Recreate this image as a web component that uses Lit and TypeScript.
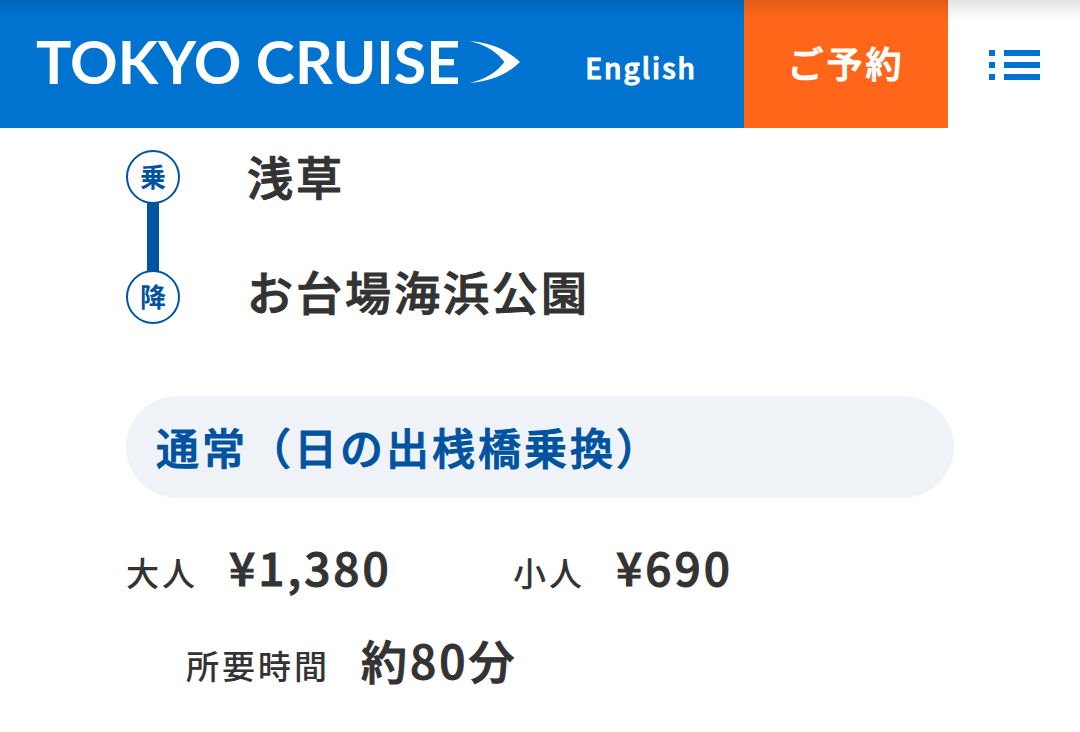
import { LitElement, html, css } from "lit";
import { customElement } from "lit/decorators.js";

@customElement("app-root")
export class AppRoot extends LitElement {
  static styles = css`
    :host {
      display: block;
      font-family: "Noto Sans CJK JP", sans-serif;
      font-weight: 500;
      letter-spacing: 3px;
      color: #333;
      background: #fff;
    }
    header {
      position: relative;
      display: flex;
      height: 128px;
      background: #0073d1;
    }
    header::after {
      content: "";
      position: absolute;
      inset: 0 0 auto;
      height: 20px;
      background: linear-gradient(rgba(0, 0, 0, 0.11), transparent);
      pointer-events: none;
    }
    a { color: inherit; text-decoration: none; }
    .brand {
      display: flex;
      align-items: center;
      flex: 1;
      gap: 10px;
      padding: 0 0 4px 36px;
      color: #fff;
      font: 700 59px/124px Lato, sans-serif;
      letter-spacing: normal;
      white-space: nowrap;
    }
    .swoosh { width: 50px; height: 42px; fill: #fff; }
    .lang {
      padding: 6px 47px 0 0;
      color: #fff;
      font-size: 28px;
      letter-spacing: 2px;
      line-height: 122px;
    }
    .reserve {
      width: 204px;
      background: #ff661a;
      color: #fff;
      font-size: 36px;
      line-height: 124px;
      text-align: center;
    }
    .menu {
      display: grid;
      place-items: center;
      width: 132px;
      padding: 2px 0 0;
      border: 0;
      background: #fff;
    }
    .bars { width: 51px; height: 30px; fill: #0073d1; }
    .lang, .reserve, .stops, .plan, dd {
      -webkit-text-stroke: 1px currentColor;
    }
    main { padding: 22px 126px 40px; }
    .route { display: flex; gap: 67px; }
    .marks { flex: none; width: 54px; }
    .mark {
      display: block;
      box-sizing: border-box;
      height: 54px;
      border: 2px solid #00539f;
      border-radius: 50%;
      color: #00539f;
      font-size: 26px;
      font-weight: 700;
      letter-spacing: 0;
      line-height: 48px;
      text-align: center;
    }
    .track {
      display: block;
      width: 12px;
      height: 68px;
      margin: -1px auto;
      background: #00539f;
    }
    .stops {
      display: grid;
      align-content: start;
      gap: 65px;
      margin: 0;
      padding: 0;
      list-style: none;
      font-size: 46px;
      line-height: 50px;
    }
    .plan {
      margin: 72px 0 0;
      padding: 0 30px 2px;
      border-radius: 51px;
      background: #eff3f8;
      color: #00539f;
      font-size: 43px;
      font-weight: inherit;
      line-height: 100px;
    }
    .facts {
      display: grid;
      grid-template-columns: 387px 1fr;
      row-gap: 18px;
      margin: 34px 0 0;
    }
    .fact {
      display: flex;
      align-items: baseline;
      gap: 31px;
      line-height: 69px;
    }
    .time { grid-column: 1 / -1; padding-left: 60px; }
    dt { font-size: 33px; }
    dd { margin: 0; font-size: 46px; }
  `;

  render() {
    return html`
      <header>
        <a class="brand" href="#">TOKYO CRUISE
          <svg class="swoosh" viewBox="0 0 48 42" preserveAspectRatio="none" aria-hidden="true">
            <path d="M0 0C22 2 37 10 48 21C37 32 22 40 0 42C15 38 26 31 33 21C26 11 15 4 0 0Z" />
          </svg>
        </a>
        <a class="lang" href="#">English</a>
        <a class="reserve" href="#">ご予約</a>
        <button class="menu" aria-label="メニュー">
          <svg class="bars" viewBox="0 0 51 30" aria-hidden="true">
            <path d="M0 0h6v6H0zM15 0h36v6H15zM0 12h6v6H0zM15 12h36v6H15zM0 24h6v6H0zM15 24h36v6H15z" />
          </svg>
        </button>
      </header>
      <main>
        <section class="route">
          <div class="marks">
            <span class="mark">乗</span>
            <span class="track"></span>
            <span class="mark">降</span>
          </div>
          <ol class="stops">
            <li>浅草</li>
            <li>お台場海浜公園</li>
          </ol>
        </section>
        <h2 class="plan">通常（日の出桟橋乗換）</h2>
        <dl class="facts">
          <div class="fact"><dt>大人</dt><dd>¥1,380</dd></div>
          <div class="fact"><dt>小人</dt><dd>¥690</dd></div>
          <div class="fact time"><dt>所要時間</dt><dd>約80分</dd></div>
        </dl>
      </main>
    `;
  }
}
